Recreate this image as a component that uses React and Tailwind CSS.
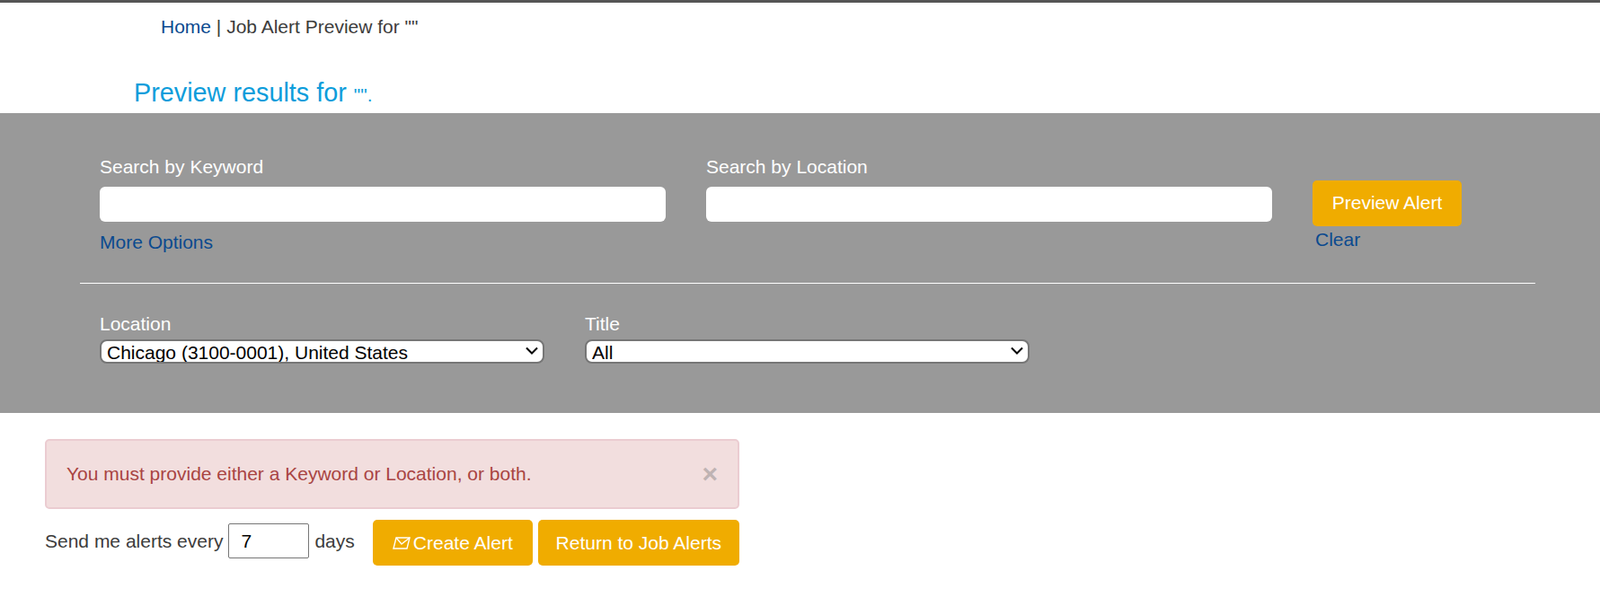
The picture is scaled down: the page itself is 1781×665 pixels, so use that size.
const Chevron = () => (
    <svg className="absolute right-[7px] top-[8px] pointer-events-none" width="14" height="9" viewBox="0 0 14 9" fill="none" stroke="black" strokeWidth="2">
        <path d="M1 1.5L7 7.5L13 1.5" />
    </svg>
);

const App = () => {
    return (
        <div className="min-h-[665px] bg-white font-['Liberation_Sans',Arial,sans-serif] text-[21px] text-[#3c3c3c]">
            {/* Top line */}
            <div className="h-[3px] bg-[#555555]" />

            {/* Breadcrumb */}
            <div className="pl-[179px] pt-[16px] h-[50px] leading-[22px]">
                <a href="#" className="text-[#0b4a8f]">Home</a> | Job Alert Preview for ""
            </div>

            {/* Heading */}
            <h1 className="pl-[149px] pt-[34px] h-[73px] text-[#0d9ddb] text-[28.8px] leading-[32px]">
                Preview results for <span className="text-[21px]">"".</span>
            </h1>

            {/* Search panel */}
            <div className="h-[334px] bg-[#999999] px-[89px] pt-[49px] text-white">
                <div className="flex pl-[22px] h-[140px]">
                    <div className="w-[630px]">
                        <label className="block leading-[22px] mb-[11px]">Search by Keyword</label>
                        <input className="block w-full h-[39px] rounded-[6px] bg-white" />
                        <a href="#" className="block mt-[12px] leading-[22px] text-[#0b4a8f]">More Options</a>
                    </div>
                    <div className="w-[630px] ml-[45px]">
                        <label className="block leading-[22px] mb-[11px]">Search by Location</label>
                        <input className="block w-full h-[39px] rounded-[6px] bg-white" />
                    </div>
                    <div className="ml-[45px] pt-[26px]">
                        <button className="block h-[51px] w-[166px] pb-[2px] rounded-[5px] bg-[#f0ac00] text-white">Preview Alert</button>
                        <a href="#" className="block mt-[4px] ml-[3px] leading-[22px] text-[#0b4a8f]">Clear</a>
                    </div>
                </div>

                <hr className="border-0 border-t border-white w-[1620px]" />

                <div className="flex pl-[22px] pt-[34px] gap-[45px]">
                    <div className="w-[495px]">
                        <label className="block leading-[22px] mb-[6px]">Location</label>
                        <div className="relative">
                            <select className="block appearance-none w-full h-[27px] rounded-[8px] border-2 border-[#767676] bg-white text-black leading-[23px] pl-[6px] pt-[1px]">
                                <option>Chicago (3100-0001), United States</option>
                            </select>
                            <Chevron />
                        </div>
                    </div>
                    <div className="w-[495px]">
                        <label className="block leading-[22px] mb-[6px]">Title</label>
                        <div className="relative">
                            <select className="block appearance-none w-full h-[27px] rounded-[8px] border-2 border-[#767676] bg-white text-black leading-[23px] pl-[6px] pt-[1px]">
                                <option>All</option>
                            </select>
                            <Chevron />
                        </div>
                    </div>
                </div>
            </div>

            {/* Alert and actions */}
            <div className="pl-[50px] pt-[29px] w-[823px]">
                <div className="flex items-center justify-between h-[78px] rounded-[5px] border-2 border-[#ebccd1] bg-[#f2dede] pl-[22px] pr-[22px] text-[#a94442]">
                    <span>You must provide either a Keyword or Location, or both.</span>
                    <span className="font-bold text-[30px] leading-none text-[#bfb3b3]">×</span>
                </div>

                <div className="flex items-center mt-[12px]">
                    <div className="flex items-center pb-[4px]">
                        <span className="whitespace-nowrap">Send me alerts every</span>
                        <input defaultValue="7" className="shrink-0 w-[90px] h-[39px] ml-[6px] mr-[6px] border border-[#767676] rounded-[2px] pl-[13px] text-black" />
                        <span>days</span>
                    </div>
                    <button className="shrink-0 flex items-center justify-center gap-[3px] w-[178px] h-[51px] ml-[20px] rounded-[5px] bg-[#f0ac00] text-white">
                        <svg width="20" height="14" viewBox="0 0 20 14" fill="none" stroke="white" strokeWidth="1.4">
                            <path d="M4 1H19L16 13H1Z" />
                            <path d="M4 1L10 8L19 1" />
                        </svg>
                        Create Alert
                    </button>
                    <button className="shrink-0 w-[224px] h-[51px] ml-[6px] rounded-[5px] bg-[#f0ac00] text-white">Return to Job Alerts</button>
                </div>
            </div>
        </div>
    );
};

export default App;
